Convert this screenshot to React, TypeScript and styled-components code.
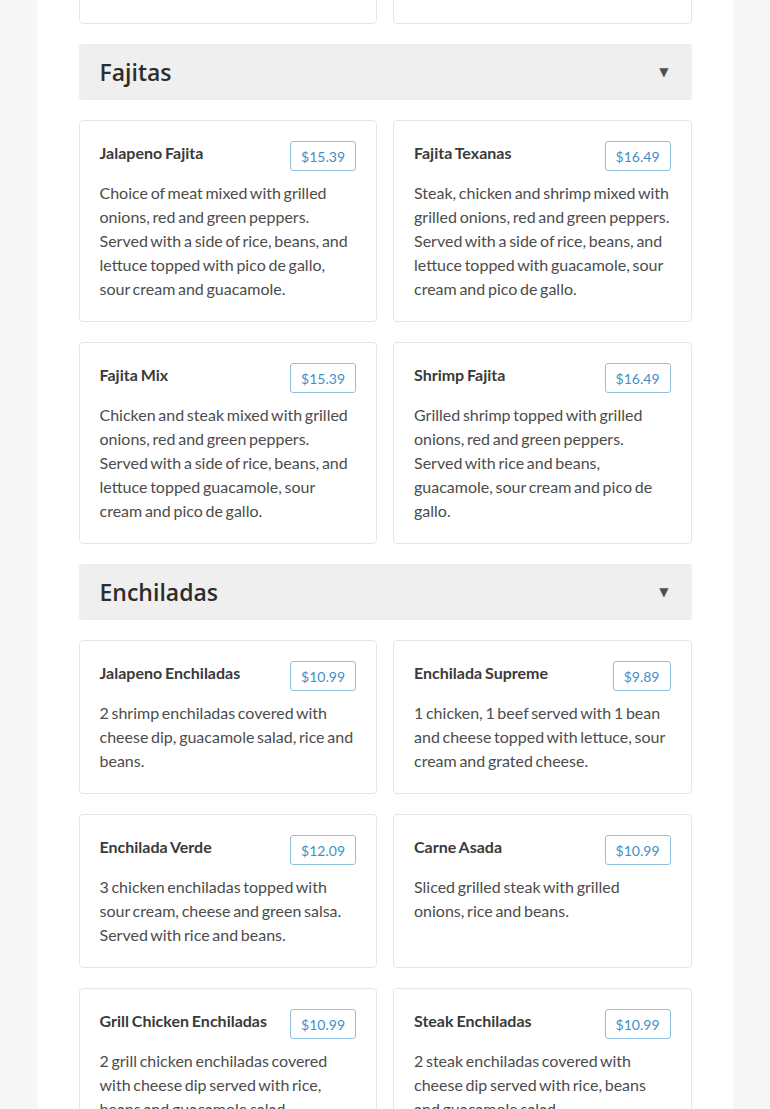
import React from 'react'
import styled, { createGlobalStyle } from 'styled-components'

type Item = { name: string; price: string; description: string }
type Section = { title: string; items: Item[] }

const previousItems: Item[] = [
  {
    name: 'Chimichanga',
    price: '$11.99',
    description: 'Flour tortilla filled with beef or chicken, deep fried.',
  },
  {
    name: 'Burrito Supreme',
    price: '$10.99',
    description: 'Beef and beans burrito covered with red sauce and cheese.',
  },
]

const sections: Section[] = [
  {
    title: 'Fajitas',
    items: [
      {
        name: 'Jalapeno Fajita',
        price: '$15.39',
        description:
          'Choice of meat mixed with grilled onions, red and green peppers. Served with a side of rice, beans, and lettuce topped with pico de gallo, sour cream and guacamole.',
      },
      {
        name: 'Fajita Texanas',
        price: '$16.49',
        description:
          'Steak, chicken and shrimp mixed with grilled onions, red and green peppers. Served with a side of rice, beans, and lettuce topped with guacamole, sour cream and pico de gallo.',
      },
      {
        name: 'Fajita Mix',
        price: '$15.39',
        description:
          'Chicken and steak mixed with grilled onions, red and green peppers. Served with a side of rice, beans, and lettuce topped guacamole, sour cream and pico de gallo.',
      },
      {
        name: 'Shrimp Fajita',
        price: '$16.49',
        description:
          'Grilled shrimp topped with grilled onions, red and green peppers. Served with rice and beans, guacamole, sour cream and pico de gallo.',
      },
    ],
  },
  {
    title: 'Enchiladas',
    items: [
      {
        name: 'Jalapeno Enchiladas',
        price: '$10.99',
        description: '2 shrimp enchiladas covered with cheese dip, guacamole salad, rice and beans.',
      },
      {
        name: 'Enchilada Supreme',
        price: '$9.89',
        description:
          '1 chicken, 1 beef served with 1 bean and cheese topped with lettuce, sour cream and grated cheese.',
      },
      {
        name: 'Enchilada Verde',
        price: '$12.09',
        description:
          '3 chicken enchiladas topped with sour cream, cheese and green salsa. Served with rice and beans.',
      },
      {
        name: 'Carne Asada',
        price: '$10.99',
        description: 'Sliced grilled steak with grilled onions, rice and beans.',
      },
      {
        name: 'Grill Chicken Enchiladas',
        price: '$10.99',
        description:
          '2 grill chicken enchiladas covered with cheese dip served with rice, beans and guacamole salad.',
      },
      {
        name: 'Steak Enchiladas',
        price: '$10.99',
        description:
          '2 steak enchiladas covered with cheese dip served with rice, beans and guacamole salad.',
      },
    ],
  },
]

function MenuCard({ item }: { item: Item }) {
  return (
    <Card>
      <CardTop>
        <ItemName>{item.name}</ItemName>
        <Price>{item.price}</Price>
      </CardTop>
      <Description>{item.description}</Description>
    </Card>
  )
}

export default function App() {
  return (
    <>
      <GlobalStyle />
      <Panel>
        <Grid>
          {previousItems.map((item) => (
            <MenuCard key={item.name} item={item} />
          ))}
        </Grid>
        {sections.map((section) => (
          <React.Fragment key={section.title}>
            <SectionHeader>
              <SectionTitle>{section.title}</SectionTitle>
              <Caret>▼</Caret>
            </SectionHeader>
            <Grid>
              {section.items.map((item) => (
                <MenuCard key={item.name} item={item} />
              ))}
            </Grid>
          </React.Fragment>
        ))}
      </Panel>
    </>
  )
}

const GlobalStyle = createGlobalStyle`
  html, body {
    margin: 0;
    padding: 0;
    background: #f7f7f7;
    overflow: hidden;
  }
  body {
    font-family: Lato, "Liberation Sans", sans-serif;
  }
`

const Panel = styled.main`
  width: 695px;
  margin: -106px auto 0;
  background: #ffffff;
  padding: 0 41px 40px 41px;
  box-sizing: border-box;
  display: flex;
  flex-direction: column;
  gap: 20px;
  min-height: 1300px;
`

const Grid = styled.div`
  display: grid;
  grid-template-columns: 1fr 1fr;
  gap: 20px 16px;
`

const Card = styled.article`
  border: 1px solid #e6e6e6;
  border-radius: 4px;
  padding: 20px;
  background: #fff;
  display: flex;
  flex-direction: column;
  gap: 10px;
`

const CardTop = styled.div`
  display: flex;
  justify-content: space-between;
  align-items: flex-start;
  gap: 10px;
`

const ItemName = styled.h3`
  margin: 0;
  font-size: 16px;
  line-height: 24px;
  font-weight: 700;
  color: #3a3a3a;
  word-spacing: -1px;
`

const Price = styled.span`
  flex-shrink: 0;
  height: 30px;
  box-sizing: border-box;
  padding: 0 10px;
  display: inline-flex;
  align-items: center;
  border: 1px solid #8fc1df;
  border-radius: 3px;
  font-size: 14px;
  color: #3f90c8;
`

const Description = styled.p`
  margin: 0;
  font-size: 16px;
  line-height: 24px;
  color: #4c4c4c;
  word-spacing: -1.4px;
`

const SectionHeader = styled.div`
  height: 56px;
  box-sizing: border-box;
  padding: 0 23px 0 21px;
  background: #efefef;
  border-radius: 3px;
  display: flex;
  align-items: center;
  justify-content: space-between;
`

const SectionTitle = styled.h2`
  margin: 0;
  font-family: "Open Sans", Lato, sans-serif;
  font-size: 23px;
  font-weight: 600;
  color: #2d2d2d;
`

const Caret = styled.span`
  font-family: "DejaVu Sans", sans-serif;
  font-size: 12px;
  color: #4a4f57;
`
